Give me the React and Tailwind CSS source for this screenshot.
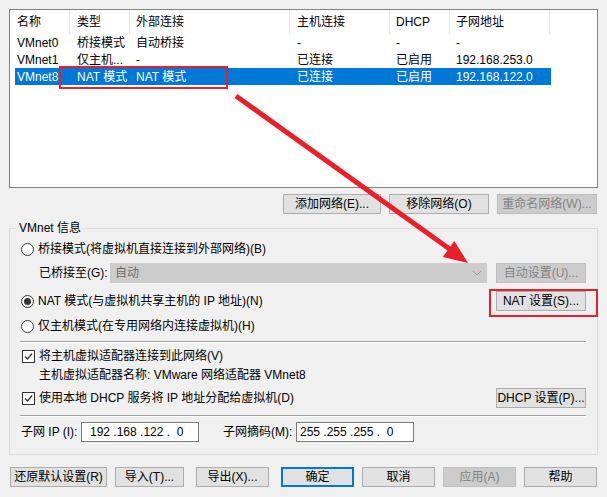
import React from 'react';

const Btn = ({ children, w, disabled, primary }) => (
  <div
    className={`h-[20px] flex items-center justify-center border ${
      disabled
        ? 'bg-[#cccccc] border-[#bfbfbf] text-[#838383]'
        : primary
        ? 'bg-[#e1e1e1] border-[#0078d7] border-2 text-black'
        : 'bg-[#e1e1e1] border-[#adadad] text-black'
    } ${w}`}
  >
    {children}
  </div>
);

const Radio = ({ checked }) => (
  <div className="w-[13px] h-[13px] rounded-full border border-[#333333] bg-white flex items-center justify-center">
    {checked && <div className="w-[7px] h-[7px] rounded-full bg-[#333333]" />}
  </div>
);

const Check = () => (
  <div className="w-[13px] h-[13px] border border-[#333333] bg-white flex items-center justify-center">
    <svg width="11" height="11" viewBox="0 0 11 11">
      <path d="M2 5.5 L4.5 8 L9 2.5" fill="none" stroke="#333" strokeWidth="1.3" />
    </svg>
  </div>
);

const rows = [
  ['VMnet0', '桥接模式', '自动桥接', '-', '-', '-'],
  ['VMnet1', '仅主机...', '-', '已连接', '已启用', '192.168.253.0'],
  ['VMnet8', 'NAT 模式', 'NAT 模式', '已连接', '已启用', '192.168.122.0'],
];

const App = () => {
  return (
    <div className="w-[607px] h-[497px] bg-[#f0f0f0] relative overflow-hidden text-[12px] leading-none text-black font-['Liberation_Sans','Noto_Sans_CJK_SC',sans-serif]">
      {/* network list */}
      <div className="ml-[9px] mt-[9px] w-[589px] h-[179px] border border-[#828282] bg-white">
        <div className="flex h-[24px]">
          <div className="w-[60px] pl-[7px] flex items-center border-r border-[#e5e5e5]">名称</div>
          <div className="w-[60px] pl-[7px] flex items-center border-r border-[#e5e5e5]">类型</div>
          <div className="w-[160px] pl-[6px] flex items-center border-r border-[#e5e5e5]">外部连接</div>
          <div className="w-[100px] pl-[7px] flex items-center border-r border-[#e5e5e5]">主机连接</div>
          <div className="w-[60px] pl-[6px] flex items-center border-r border-[#e5e5e5]">DHCP</div>
          <div className="w-[100px] pl-[6px] flex items-center border-r border-[#e5e5e5]">子网地址</div>
        </div>
        {rows.map((r, i) => (
          <div
            key={r[0]}
            className={`ml-[5px] w-[536px] h-[17px] flex items-center ${
              i === 2 ? 'bg-[#0078d7] text-white' : ''
            }`}
          >
            <div className="w-[55px] pl-[2px]">{r[0]}</div>
            <div className="w-[60px] pl-[7px]">{r[1]}</div>
            <div className="w-[160px] pl-[6px]">{r[2]}</div>
            <div className="w-[100px] pl-[7px]">{r[3]}</div>
            <div className="w-[60px] pl-[6px]">{r[4]}</div>
            <div className="w-[100px] pl-[6px]">{r[5]}</div>
          </div>
        ))}
      </div>

      {/* list buttons */}
      <div className="flex justify-end gap-[8px] pr-[10px] mt-[6px]">
        <Btn w="w-[98px]">添加网络(E)...</Btn>
        <Btn w="w-[100px]">移除网络(O)</Btn>
        <Btn w="w-[100px]" disabled>重命名网络(W)...</Btn>
      </div>

      {/* VMnet info group */}
      <div className="ml-[9px] mt-[14px] w-[589px] h-[227px] border border-[#dcdcdc] relative">
        <span className="absolute -top-[7px] left-[6px] px-[3px] bg-[#f0f0f0]">VMnet 信息</span>

        <div className="mt-[11px] pl-[11px] h-[18px] flex items-center gap-[4px]">
          <Radio />
          <span>桥接模式(将虚拟机直接连接到外部网络)(B)</span>
        </div>

        <div className="mt-[5px] pl-[29px] pr-[11px] h-[20px] flex items-center">
          <span className="w-[71px]">已桥接至(G):</span>
          <div className="w-[377px] h-[20px] bg-[#cccccc] border border-[#cccccc] flex items-center justify-between pl-[4px] pr-[4px] text-[#6d6d6d]">
            <span>自动</span>
            <svg width="10" height="6" viewBox="0 0 10 6">
              <path d="M1 1 L5 5 L9 1" fill="none" stroke="#9a9a9a" strokeWidth="1" />
            </svg>
          </div>
          <div className="ml-auto">
            <Btn w="w-[90px]" disabled>自动设置(U)...</Btn>
          </div>
        </div>

        <div className="mt-[8px] pl-[11px] pr-[11px] h-[20px] flex items-center">
          <div className="flex items-center gap-[4px]">
            <Radio checked />
            <span>NAT 模式(与虚拟机共享主机的 IP 地址)(N)</span>
          </div>
          <div className="ml-auto">
            <Btn w="w-[90px]">NAT 设置(S)...</Btn>
          </div>
        </div>

        <div className="mt-[6px] pl-[11px] h-[18px] flex items-center gap-[4px]">
          <Radio />
          <span>仅主机模式(在专用网络内连接虚拟机)(H)</span>
        </div>

        <div className="mt-[6px] ml-[10px] mr-[11px] border-t border-b border-t-[#a0a0a0] border-b-white" />

        <div className="mt-[4px] pl-[12px] h-[18px] flex items-center gap-[4px]">
          <Check />
          <span>将主机虚拟适配器连接到此网络(V)</span>
        </div>

        <div className="mt-[1px] pl-[29px] h-[18px] flex items-center">
          主机虚拟适配器名称: VMware 网络适配器 VMnet8
        </div>

        <div className="mt-[4px] pl-[12px] pr-[11px] h-[20px] flex items-center">
          <div className="flex items-center gap-[4px]">
            <Check />
            <span>使用本地 DHCP 服务将 IP 地址分配给虚拟机(D)</span>
          </div>
          <div className="ml-auto">
            <Btn w="w-[90px]">DHCP 设置(P)...</Btn>
          </div>
        </div>

        <div className="mt-[7px] ml-[10px] mr-[11px] border-t border-b border-t-[#a0a0a0] border-b-white" />

        <div className="mt-[5px] pl-[11px] h-[20px] flex items-center">
          <span className="w-[60px]">子网 IP (I):</span>
          <div className="w-[118px] h-[20px] bg-white border border-[#7a7a7a] flex items-center pl-[8px] whitespace-pre">
            192 .168 .122 .  0
          </div>
          <span className="ml-[24px] w-[73px]">子网摘码(M):</span>
          <div className="w-[118px] h-[20px] bg-white border border-[#7a7a7a] flex items-center pl-[3px] whitespace-pre">
            255 .255 .255 .  0
          </div>
        </div>
      </div>

      {/* bottom buttons */}
      <div className="mt-[12px] pl-[10px] flex items-center">
        <Btn w="w-[97px]">还原默认设置(R)</Btn>
        <div className="ml-[8px]">
          <Btn w="w-[69px]">导入(T)...</Btn>
        </div>
        <div className="ml-[12px]">
          <Btn w="w-[73px]">导出(X)...</Btn>
        </div>
        <div className="ml-[12px]">
          <Btn w="w-[73px]" primary>确定</Btn>
        </div>
        <div className="ml-[8px]">
          <Btn w="w-[73px]">取消</Btn>
        </div>
        <div className="ml-[8px]">
          <Btn w="w-[73px]" disabled>应用(A)</Btn>
        </div>
        <div className="ml-[8px]">
          <Btn w="w-[73px]">帮助</Btn>
        </div>
      </div>

      {/* annotations */}
      <div className="absolute left-[59px] top-[66px] w-[169px] h-[23px] border-2 border-[#e8202a]" />
      <div className="absolute left-[489px] top-[289px] w-[109px] h-[28px] border-2 border-[#e8202a]" />
      <svg className="absolute left-0 top-0 pointer-events-none" width="607" height="497">
        <line x1="236" y1="96" x2="451" y2="250" stroke="#e8202a" strokeWidth="5" />
        <polygon points="468,263 442.7,257.1 454.3,240.9" fill="#e8202a" />
      </svg>
    </div>
  );
};

export default App;
